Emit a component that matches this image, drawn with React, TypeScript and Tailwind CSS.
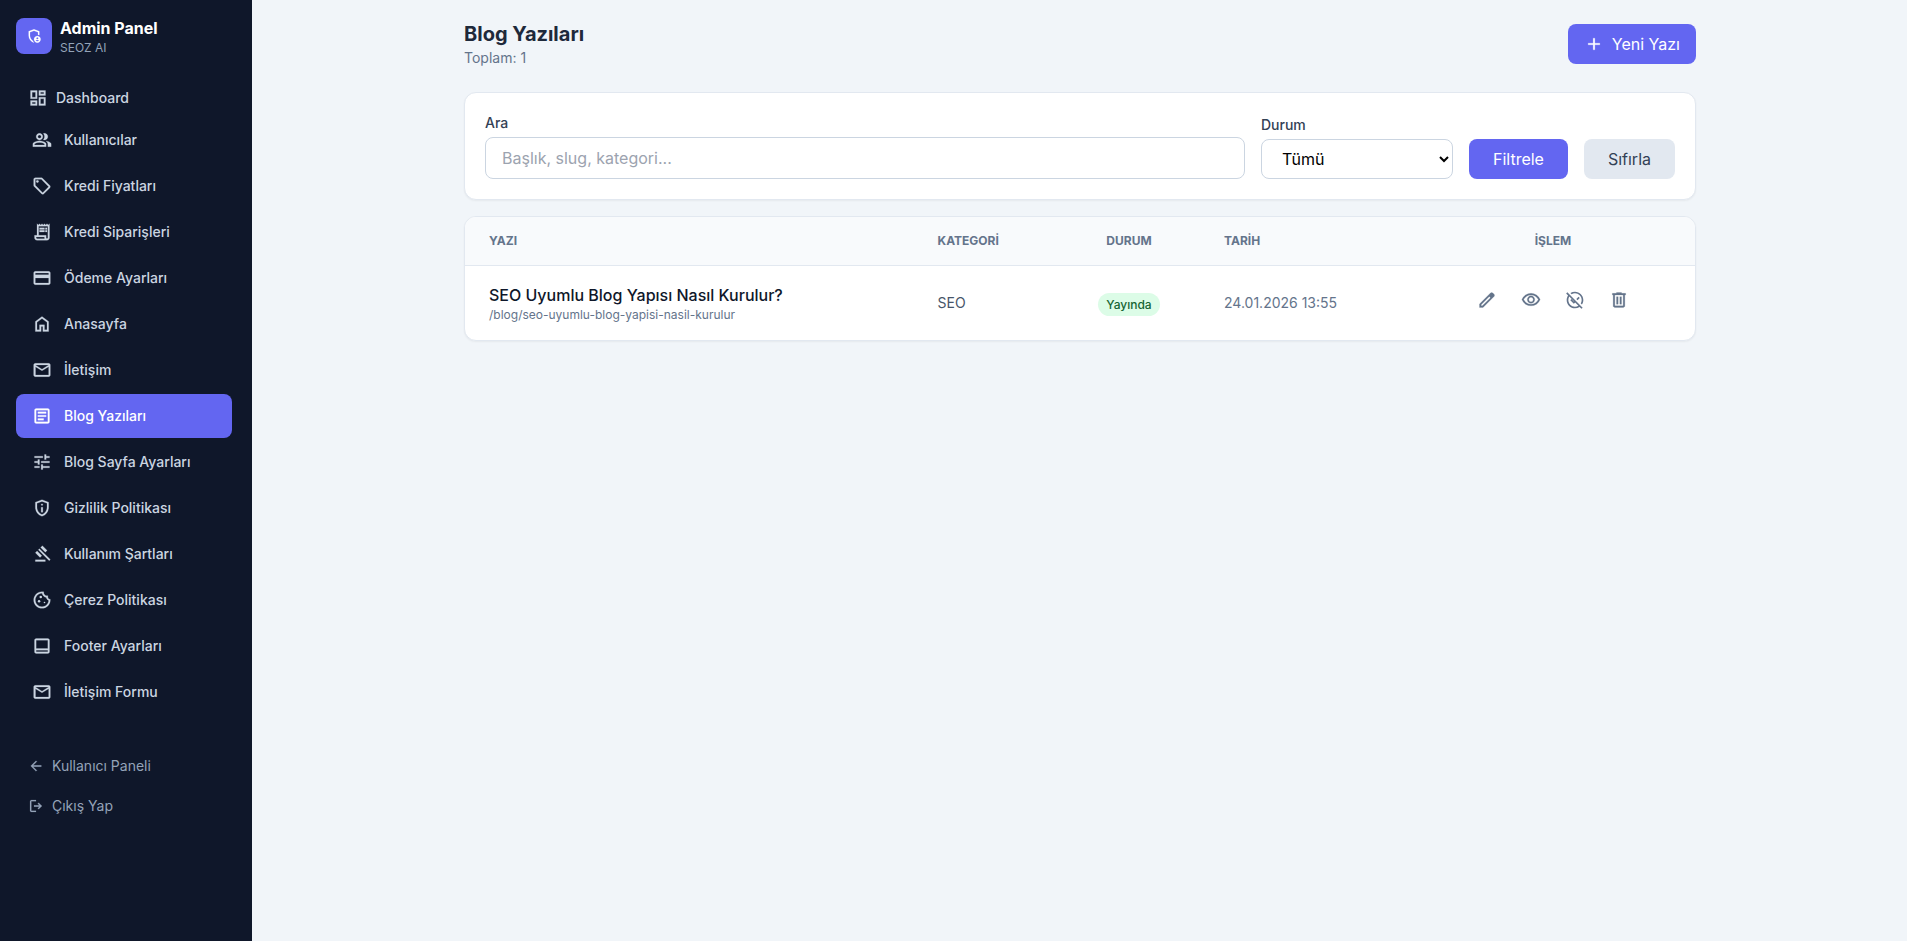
import type { ReactNode } from 'react';
import { MdOutlineArticle, MdOutlineCookie, MdOutlineReceiptLong, MdOutlineUnpublished, MdTune } from 'react-icons/md';

const paths = {
    admin: 'M680-280q25 0 42.5-17.5T740-340q0-25-17.5-42.5T680-400q-25 0-42.5 17.5T620-340q0 25 17.5 42.5T680-280Zm0 120q31 0 57-14.5t44-38.5q-22-13-47-20t-54-7q-29 0-54 7t-47 20q18 24 44 38.5t57 14.5ZM480-80q-139-35-229.5-159.5T160-516v-244l320-120 320 120v227q-19-8-39-14.5t-41-9.5v-147l-240-90-240 90v188q0 47 12.5 94t35 89.5Q310-290 342-254t71 60q11 32 29 61t41 52q-1 0-1.5.5t-1.5.5Zm200 0q-83 0-141.5-58.5T480-280q0-83 58.5-141.5T680-480q83 0 141.5 58.5T880-280q0 83-58.5 141.5T680-80Z',
    dashboard:
        'M520-600v-240h320v240H520ZM120-440v-400h320v400H120Zm400 320v-400h320v400H520Zm-400 0v-240h320v240H120Zm80-400h160v-240H200v240Zm400 320h160v-240H600v240Zm0-480h160v-80H600v80ZM200-200h160v-80H200v80Z',
    group: 'M40-160v-112q0-34 17.5-62.5T104-378q62-31 126-46.5T360-440q66 0 130 15.5T616-378q29 15 46.5 43.5T680-272v112H40Zm720 0v-120q0-44-24.5-84.5T666-434q51 6 96 20.5t84 35.5q36 20 55 44.5t19 53.5v120H760ZM360-480q-66 0-113-47t-47-113q0-66 47-113t113-47q66 0 113 47t47 113q0 66-47 113t-113 47Zm400-160q0 66-47 113t-113 47q-11 0-28-2.5t-28-5.5q27-32 41.5-71t14.5-81q0-42-14.5-81T544-792q14-5 28-6.5t28-1.5q66 0 113 47t47 113ZM120-240h480v-32q0-11-5.5-20T580-306q-54-27-109-40.5T360-360q-56 0-111 13.5T140-306q-9 5-14.5 14t-5.5 20v32Zm240-320q33 0 56.5-23.5T440-640q0-33-23.5-56.5T360-720q-33 0-56.5 23.5T280-640q0 33 23.5 56.5T360-560Z',
    sell: 'M856-390 570-104q-12 12-27 18t-30 6q-15 0-30-6t-27-18L103-457q-11-11-17-25.5T80-513v-287q0-33 23.5-56.5T160-880h287q16 0 31 6.5t26 17.5l352 353q12 12 17.5 27t5.5 30q0 15-5.5 29.5T856-390ZM513-160l286-286-353-354H160v286l353 354ZM260-640q25 0 42.5-17.5T320-700q0-25-17.5-42.5T260-760q-25 0-42.5 17.5T200-700q0 25 17.5 42.5T260-640Z',
    card: 'M880-720v480q0 33-23.5 56.5T800-160H160q-33 0-56.5-23.5T80-240v-480q0-33 23.5-56.5T160-800h640q33 0 56.5 23.5T880-720Zm-720 80h640v-80H160v80Zm0 160v240h640v-240H160Z',
    home: 'M240-200h120v-240h240v240h120v-360L480-740 240-560v360Zm-80 80v-480l320-240 320 240v480H520v-240h-80v240H160Z',
    mail: 'M160-160q-33 0-56.5-23.5T80-240v-480q0-33 23.5-56.5T160-800h640q33 0 56.5 23.5T880-720v480q0 33-23.5 56.5T800-160H160Zm320-280L160-640v400h640v-400L480-440Zm0-80 320-200H160l320 200ZM160-640v-80 480-400Z',
    shield: 'M440-280h80v-240h-80v240Zm40-320q17 0 28.5-11.5T520-640q0-17-11.5-28.5T480-680q-17 0-28.5 11.5T440-640q0 17 11.5 28.5T480-600Zm0 520q-139-35-229.5-159.5T160-516v-244l320-120 320 120v244q0 152-90.5 276.5T480-80Zm0-84q104-33 172-132t68-220v-189l-240-90-240 90v189q0 121 68 220t172 132Z',
    gavel: 'M160-120v-80h480v80H160Zm226-194L160-540l84-86 228 226-86 86Zm254-254L414-796l86-84 226 226-86 86Zm184 408L302-682l56-56 522 522-56 56Z',
    footer: 'M200-120q-33 0-56.5-23.5T120-200v-560q0-33 23.5-56.5T200-840h560q33 0 56.5 23.5T840-760v560q0 33-23.5 56.5T760-120H200Zm0-160v80h560v-80H200Zm0-80h560v-400H200v400Z',
    back: 'm313-440 224 224-57 56-320-320 320-320 57 56-224 224h487v80H313Z',
    logout: 'M200-120q-33 0-56.5-23.5T120-200v-560q0-33 23.5-56.5T200-840h280v80H200v560h280v80H200Zm440-160-55-58 102-102H360v-80h327L585-622l55-58 200 200-200 200Z',
    add: 'M440-440H200v-80h240v-240h80v240h240v80H520v240h-80v-240Z',
    edit: 'M200-200h57l391-391-57-57-391 391v57Zm-80 80v-170l528-527q12-11 26.5-17t30.5-6q16 0 31 6t26 18l55 56q12 11 17.5 26t5.5 30q0 16-5.5 30.5T817-647L290-120H120Zm640-584-56-56 56 56Zm-141 85-28-29 57 57-29-28Z',
    eye: 'M480-320q75 0 127.5-52.5T660-500q0-75-52.5-127.5T480-680q-75 0-127.5 52.5T300-500q0 75 52.5 127.5T480-320Zm0-72q-45 0-76.5-31.5T372-500q0-45 31.5-76.5T480-608q45 0 76.5 31.5T588-500q0 45-31.5 76.5T480-392Zm0 192q-146 0-266-81.5T40-500q54-137 174-218.5T480-800q146 0 266 81.5T920-500q-54 137-174 218.5T480-200Zm0-80q113 0 207.5-59.5T832-500q-50-101-144.5-160.5T480-720q-113 0-207.5 59.5T128-500q50 101 144.5 160.5T480-280Z',
    trash: 'M280-120q-33 0-56.5-23.5T200-200v-520h-40v-80h200v-40h240v40h200v80h-40v520q0 33-23.5 56.5T680-120H280Zm400-600H280v520h400v-520ZM360-280h80v-360h-80v360Zm160 0h80v-360h-80v360Z',
};

const Icon = ({ name, size = 20 }: { name: keyof typeof paths; size?: number }) => (
    <svg
        width={size}
        height={size}
        viewBox="0 -960 960 960"
        fill="currentColor"
        stroke="currentColor"
        strokeWidth={10}
        className="shrink-0"
    >
        <path d={paths[name]} />
    </svg>
);

const mdClass = 'shrink-0 [&>path:not([fill=none])]:stroke-[0.25]';

const navItems: { label: string; icon: ReactNode; active?: boolean }[] = [
    { label: 'Kullanıcılar', icon: <Icon name="group" /> },
    { label: 'Kredi Fiyatları', icon: <Icon name="sell" /> },
    { label: 'Kredi Siparişleri', icon: <MdOutlineReceiptLong size={20} className={mdClass} /> },
    { label: 'Ödeme Ayarları', icon: <Icon name="card" /> },
    { label: 'Anasayfa', icon: <Icon name="home" /> },
    { label: 'İletişim', icon: <Icon name="mail" /> },
    { label: 'Blog Yazıları', icon: <MdOutlineArticle size={20} className={mdClass} />, active: true },
    { label: 'Blog Sayfa Ayarları', icon: <MdTune size={20} className={mdClass} /> },
    { label: 'Gizlilik Politikası', icon: <Icon name="shield" /> },
    { label: 'Kullanım Şartları', icon: <Icon name="gavel" /> },
    { label: 'Çerez Politikası', icon: <MdOutlineCookie size={20} className={mdClass} /> },
    { label: 'Footer Ayarları', icon: <Icon name="footer" /> },
    { label: 'İletişim Formu', icon: <Icon name="mail" /> },
];

const Sidebar = () => (
    <aside className="w-[252px] shrink-0 bg-[#0f172a] px-4 pt-4">
        <div className="flex items-center gap-2">
            <div className="flex h-9 w-9 items-center justify-center rounded-lg bg-[#6366f1] text-white">
                <Icon name="admin" size={16} />
            </div>
            <div>
                <p className="text-base leading-6 font-bold text-white">Admin Panel</p>
                <p className="text-xs leading-4 text-[#94a3b8]">SEOZ AI</p>
            </div>
        </div>

        <nav className="mt-[22px] text-sm font-medium text-[#cbd5e1]">
            <a className="flex h-10 items-center gap-2 px-3">
                <Icon name="dashboard" />
                Dashboard
            </a>
            <div className="flex w-[216px] flex-col gap-0.5">
                {navItems.map((item) => (
                    <a
                        key={item.label}
                        className={`flex h-11 items-center gap-3 rounded-lg px-4 ${
                            item.active ? 'bg-[#6366f1] text-white' : ''
                        }`}
                    >
                        {item.icon}
                        {item.label}
                    </a>
                ))}
            </div>
        </nav>

        <div className="mt-8 text-sm text-[#94a3b8]">
            <a className="flex h-10 items-center gap-2 px-3">
                <Icon name="back" size={16} />
                Kullanıcı Paneli
            </a>
            <a className="flex h-10 items-center gap-2 px-3">
                <Icon name="logout" size={16} />
                Çıkış Yap
            </a>
        </div>
    </aside>
);

const Filters = () => (
    <div className="mt-6 flex items-end gap-4 rounded-xl border border-[#e2e8f0] bg-white p-5 shadow-xs">
        <div className="flex-1">
            <label className="mb-1 block text-sm font-medium text-[#334155]">Ara</label>
            <input
                placeholder="Başlık, slug, kategori..."
                className="block h-[42px] w-full rounded-lg border border-[#cbd5e1] bg-white px-4 text-base placeholder:text-[#9ca3af]"
            />
        </div>
        <div>
            <label className="mb-1 block text-sm font-medium text-[#334155]">Durum</label>
            <select className="block h-10 w-48 rounded-lg border border-[#cbd5e1] bg-white px-4 text-base text-black">
                <option>Tümü</option>
            </select>
        </div>
        <button className="h-10 rounded-lg bg-[#6366f1] px-6 text-white">Filtrele</button>
        <button className="h-10 rounded-lg bg-[#e2e8f0] px-6 text-[#334155]">Sıfırla</button>
    </div>
);

const PostTable = () => (
    <div className="mt-4 overflow-hidden rounded-xl border border-[#e2e8f0] bg-white shadow-xs">
        <table className="w-full table-fixed">
            <colgroup>
                <col className="w-[448.5px]" />
                <col className="w-[144.5px]" />
                <col className="w-[142px]" />
                <col className="w-[211px]" />
                <col />
            </colgroup>
            <thead>
                <tr className="h-12 border-b border-[#e2e8f0] bg-[#f8fafc] text-left text-xs text-[#64748b]">
                    <th className="px-6 font-bold">YAZI</th>
                    <th className="px-6 font-bold">KATEGORİ</th>
                    <th className="px-6 text-center font-bold">DURUM</th>
                    <th className="px-6 font-bold">TARİH</th>
                    <th className="px-6 text-center font-bold">İŞLEM</th>
                </tr>
            </thead>
            <tbody>
                <tr className="h-[75px] text-sm text-[#64748b]">
                    <td className="px-6">
                        <p className="text-base leading-6 font-medium text-[#0f172a]">
                            SEO Uyumlu Blog Yapısı Nasıl Kurulur?
                        </p>
                        <p className="text-xs leading-4">/blog/seo-uyumlu-blog-yapisi-nasil-kurulur</p>
                    </td>
                    <td className="px-6 text-[#475569]">SEO</td>
                    <td className="px-6 pt-1 text-center">
                        <span className="inline-flex h-[23px] items-center rounded-full bg-[#dcfce7] px-2 text-xs font-medium text-[#166534]">
                            Yayında
                        </span>
                    </td>
                    <td className="px-6">24.01.2026 13:55</td>
                    <td className="px-6">
                        <div className="flex justify-center gap-6 pb-1.5">
                            <Icon name="edit" />
                            <Icon name="eye" />
                            <MdOutlineUnpublished size={20} />
                            <Icon name="trash" />
                        </div>
                    </td>
                </tr>
            </tbody>
        </table>
    </div>
);

const App = () => {
    return (
        <div className="flex min-h-screen bg-[#f1f5f9] font-['Inter',sans-serif]">
            <Sidebar />
            <main className="flex-1 pl-px">
                <div className="mx-auto max-w-7xl px-6 pt-5">
                    <div className="flex items-start justify-between">
                        <div>
                            <h1 className="text-xl leading-7 font-bold text-[#1e293b]">Blog Yazıları</h1>
                            <p className="text-sm text-[#64748b]">Toplam: 1</p>
                        </div>
                        <button className="mt-1 flex h-10 items-center gap-2 rounded-lg bg-[#6366f1] px-4 text-white">
                            <Icon name="add" />
                            Yeni Yazı
                        </button>
                    </div>
                    <Filters />
                    <PostTable />
                </div>
            </main>
        </div>
    );
};

export default App;
